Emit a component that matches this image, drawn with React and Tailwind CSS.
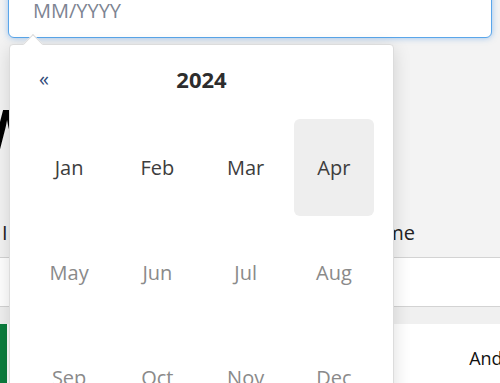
import React from "react";

const months = ["Jan", "Feb", "Mar", "Apr", "May", "Jun", "Jul", "Aug", "Sep", "Oct", "Nov", "Dec"];

export default function App() {
    // months after the current one are shown dimmed
    const current = 3;

    return (
        <div className="relative w-[500px] h-[383px] overflow-hidden bg-[#f3f3f3] font-['Open_Sans',sans-serif]">
            {/* Page behind the picker */}
            <div className="px-2">
                <div className="-mt-[12px] h-[50px] rounded-md border-[1.5px] border-[#5aa6ea] bg-white shadow-[0_0_6px_rgba(74,150,230,0.55)] flex items-end pb-[16px] px-6">
                    <span className="text-[20px] leading-none text-[#7d8492]">MM/YYYY</span>
                </div>
            </div>
            <h1 className="mt-[62px] -ml-[20px] text-[56px] leading-[56px] font-bold text-black">Work</h1>
            <div className="mt-[52px] h-[49px] flex items-center justify-between pr-[85px] text-[20px] text-[#222]">
                <span className="ml-[2px]">I</span>
                <span>Name</span>
            </div>
            <div className="border-t border-b border-[#d3d3d3] bg-white h-[50px]"></div>
            <div className="h-[17px] bg-[#f0f0f0]"></div>
            <div className="flex h-[70px] bg-white">
                <div className="w-[7px] bg-[#0b7d3e]"></div>
                <div className="flex-1 flex justify-end items-center pb-[2px]">
                    <span className="text-[18px] text-[#111] -mr-[34px]">Andrew</span>
                </div>
            </div>

            {/* Month picker popup */}
            <div className="absolute left-[9px] top-[44px] w-[385px] h-[360px] bg-white rounded border border-[#dcdcdc] shadow-[0_4px_18px_rgba(0,0,0,0.14)]">
                <div className="absolute -top-[8px] left-[16px] w-[14px] h-[14px] rotate-45 bg-white border-l border-t border-[#dcdcdc]"></div>
                <div className="relative pt-[14px] px-[15px]">
                    <div className="h-10 flex items-center relative">
                        <span className="ml-[14px] text-[20px] leading-none text-[#2f4a78]">«</span>
                        <span className="absolute left-0 right-0 text-center text-[22px] font-bold text-[#2d2d2d] pointer-events-none">2024</span>
                    </div>
                    <div className="mt-4 grid grid-cols-4">
                        {months.map((m, i) => (
                            <div key={m} className="h-[105px] p-1">
                                <div className={"h-full rounded-md flex items-center justify-center text-[20px] " + (i === current ? "bg-[#eeeeee] " : "") + (i <= current ? "text-[#3d3d3d]" : "text-[#8a8a8a]")}>
                                    {m}
                                </div>
                            </div>
                        ))}
                    </div>
                </div>
            </div>
        </div>
    );
}
